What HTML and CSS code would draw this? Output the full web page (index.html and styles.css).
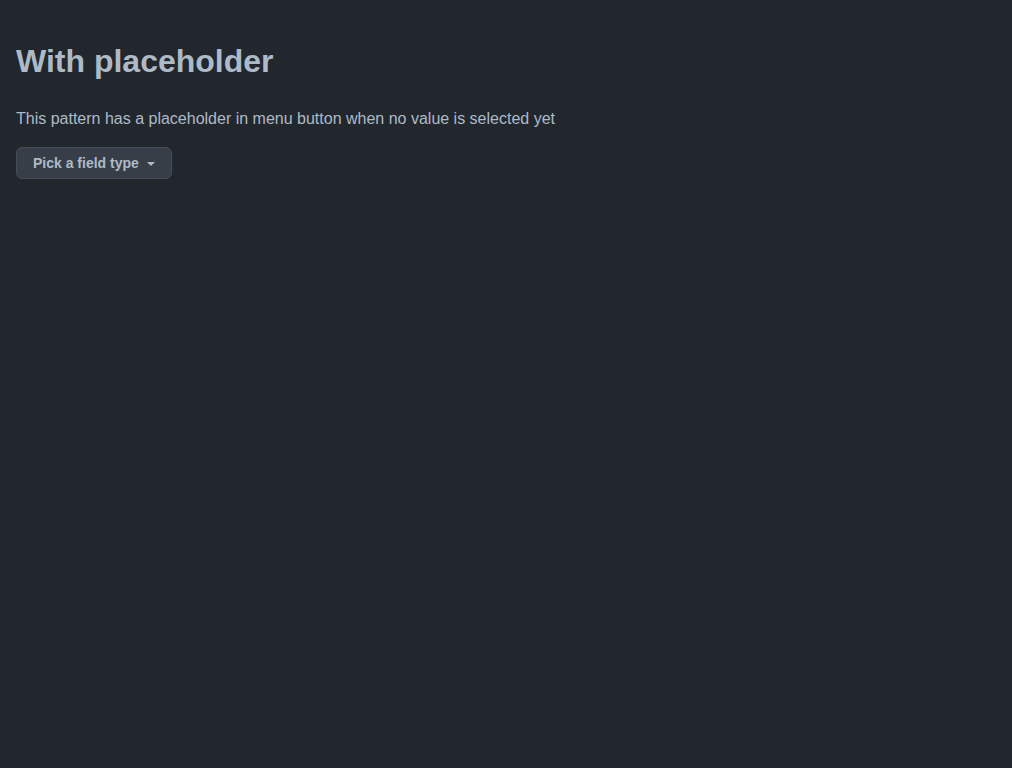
FILE: index.html
```html
<!DOCTYPE html>
<html>
<head>
<meta charset="utf-8">
<link rel="stylesheet" href="styles.css">
</head>
<body>
<main class="page">
  <h1 class="title">With placeholder</h1>
  <p class="desc">This pattern has a placeholder in menu button when no value is selected yet</p>
  <button class="menu-btn" type="button">
    <span class="menu-label">Pick a field type</span>
    <svg class="caret" width="16" height="16" viewBox="0 0 16 16" aria-hidden="true"><path d="m4.427 7.427 3.396 3.396a.25.25 0 0 0 .354 0l3.396-3.396A.25.25 0 0 0 11.396 7H4.604a.25.25 0 0 0-.177.427Z" fill="currentColor"/></svg>
  </button>
</main>
</body>
</html>
```

FILE: styles.css
```css
html, body {
  margin: 0;
  padding: 0;
  background: #22272e;
  height: 100%;
}
body {
  font-family: "Liberation Sans", Arial, sans-serif;
  color: #adbac7;
}
.page {
  padding: 16px;
}
.title {
  margin: 25px 0 0;
  font-size: 32px;
  line-height: 1.25;
  font-weight: 700;
  color: #adbac7;
}
.desc {
  margin: 26px 0 0;
  font-size: 16px;
  line-height: 1.5;
}
.menu-btn {
  margin-top: 16px;
  display: inline-flex;
  align-items: center;
  gap: 4px;
  height: 32px;
  padding: 0 12px 0 16px;
  background: #373e47;
  border: 1px solid #444c56;
  border-radius: 6px;
  color: #adbac7;
  font-family: "Liberation Sans", Arial, sans-serif;
  font-size: 14px;
  font-weight: 700;
  cursor: pointer;
}
.caret {
  display: block;
  color: #adbac7;
}
```
